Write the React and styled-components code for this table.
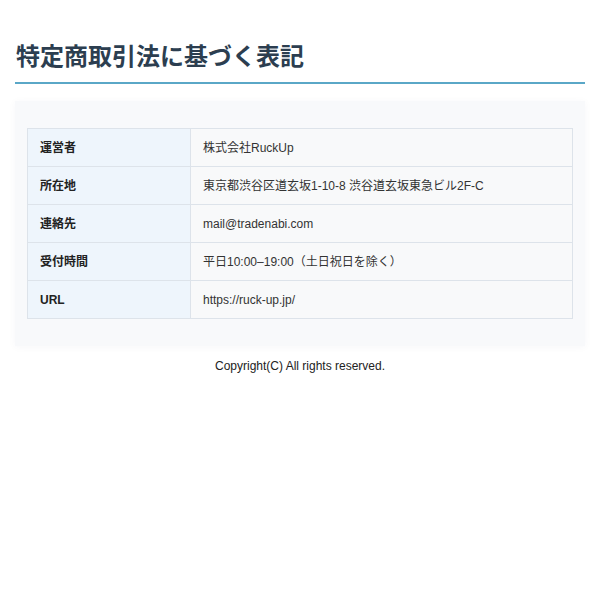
import React from "react";
import styled, { createGlobalStyle } from "styled-components";

const Global = createGlobalStyle`
  html, body { margin: 0; padding: 0; background: #ffffff; }
  body {
    font-family: "Liberation Sans", "Noto Sans CJK JP", sans-serif;
    color: #333;
  }
`;

const Page = styled.div`
  padding: 0 15px;
`;

const Title = styled.h1`
  margin: 0;
  padding: 38px 0 10px 1px;
  font-family: "Noto Sans CJK JP", sans-serif;
  font-size: 24px;
  line-height: 34px;
  font-weight: 700;
  color: #2c3e50;
  border-bottom: 2px solid #5aa7c7;
`;

const Card = styled.section`
  margin-top: 17px;
  padding: 27px 12px;
  background: #f8f9fb;
  box-shadow: 0 1px 8px rgba(40, 60, 90, 0.04);
`;

const Table = styled.table`
  width: 100%;
  border-collapse: collapse;
  font-size: 12px;
`;

const Label = styled.th`
  width: 163px;
  box-sizing: border-box;
  text-align: left;
  padding: 12px 12px 10px;
  line-height: 15px;
  font-weight: 700;
  color: #222;
  background: #eef5fc;
  border: 1px solid #dde3ea;
  font-family: "Liberation Sans", "Noto Sans CJK JP", sans-serif;
`;

const Value = styled.td`
  padding: 12px 12px 10px;
  line-height: 15px;
  color: #333;
  background: #f8f9fa;
  border: 1px solid #dde3ea;
`;

const Footer = styled.footer`
  text-align: center;
  font-size: 12px;
  color: #222;
  padding-top: 13px;
  line-height: 14px;
`;

const rows = [
  ["運営者", "株式会社RuckUp"],
  ["所在地", "東京都渋谷区道玄坂1-10-8 渋谷道玄坂東急ビル2F-C"],
  ["連絡先", "mail@tradenabi.com"],
  ["受付時間", "平日10:00–19:00（土日祝日を除く）"],
  ["URL", "https://ruck-up.jp/"],
];

export default function App() {
  return (
    <Page>
      <Global />
      <Title>特定商取引法に基づく表記</Title>
      <Card>
        <Table>
          <tbody>
            {rows.map(([k, v]) => (
              <tr key={k}>
                <Label>{k}</Label>
                <Value>{v}</Value>
              </tr>
            ))}
          </tbody>
        </Table>
      </Card>
      <Footer>Copyright(C) All rights reserved.</Footer>
    </Page>
  );
}
